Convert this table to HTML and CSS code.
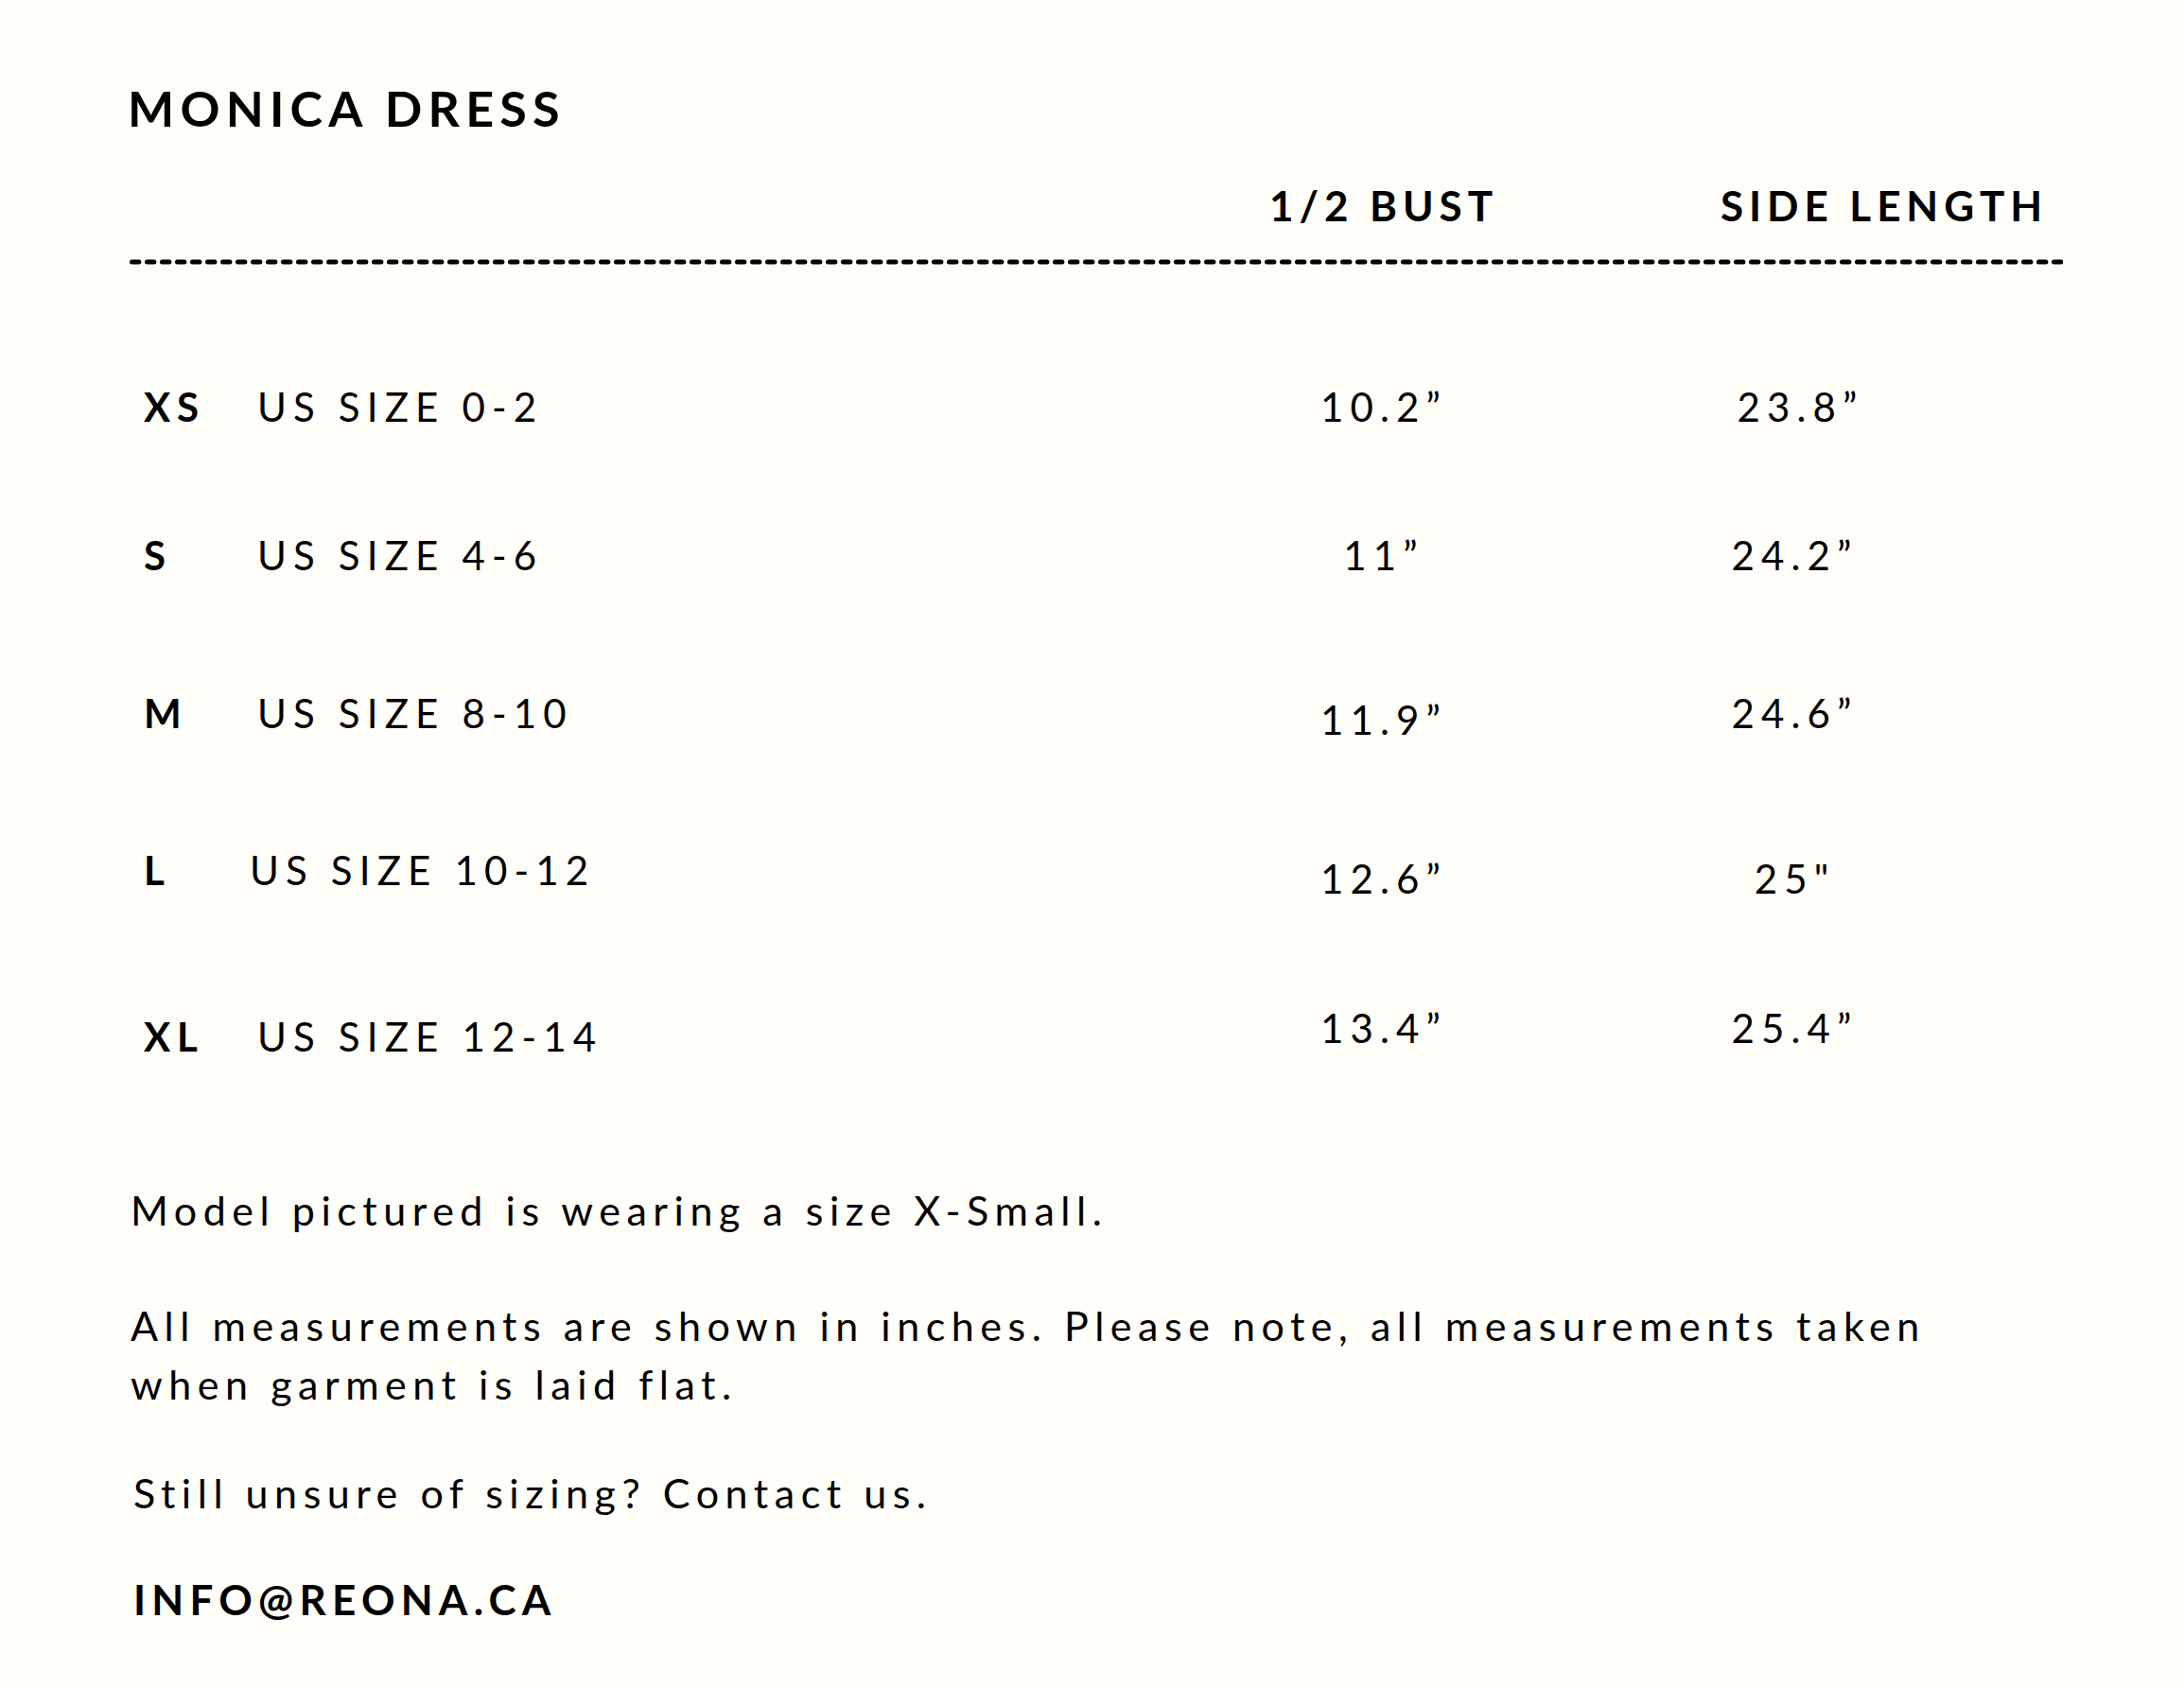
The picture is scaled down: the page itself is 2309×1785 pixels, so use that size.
FILE: index.html
```html
<!DOCTYPE html>
<html lang="en">
<head>
<meta charset="utf-8">
<title>Monica Dress – Size Guide</title>
<link rel="stylesheet" href="styles.css">
</head>
<body>
<main class="sheet">
  <h1 class="title">MONICA DRESS</h1>
  <div class="head">
    <span class="head-bust">1/2 BUST</span>
    <span class="head-side">SIDE LENGTH</span>
  </div>
  <svg class="rule" width="2046" height="6" viewBox="0 0 2046 6" aria-hidden="true">
    <line x1="4.5" y1="3" x2="2046" y2="3" stroke="#000" stroke-width="5" stroke-linecap="round" stroke-dasharray="7.4 8.6"/>
  </svg>
  <div class="rows">
    <div class="row row-xs">
      <span class="code">XS</span>
      <span class="us">US SIZE 0-2</span>
      <span class="bust">10.2”</span>
      <span class="side">23.8”</span>
    </div>
    <div class="row row-s">
      <span class="code">S</span>
      <span class="us">US SIZE 4-6</span>
      <span class="bust">11”</span>
      <span class="side">24.2”</span>
    </div>
    <div class="row row-m">
      <span class="code">M</span>
      <span class="us">US SIZE 8-10</span>
      <span class="bust">11.9”</span>
      <span class="side">24.6”</span>
    </div>
    <div class="row row-l">
      <span class="code">L</span>
      <span class="us">US SIZE 10-12</span>
      <span class="bust">12.6”</span>
      <span class="side">25"</span>
    </div>
    <div class="row row-xl">
      <span class="code">XL</span>
      <span class="us">US SIZE 12-14</span>
      <span class="bust">13.4”</span>
      <span class="side">25.4”</span>
    </div>
  </div>
  <div class="notes">
    <p class="note note-model">Model pictured is wearing a size X-Small.</p>
    <p class="note note-measure">All measurements are shown in inches. Please note, all measurements taken<br>when garment is laid flat.</p>
    <p class="note note-contact">Still unsure of sizing? Contact us.</p>
    <p class="email">INFO@REONA.CA</p>
  </div>
</main>
</body>
</html>
```

FILE: styles.css
```css
html, body {
  margin: 0;
  padding: 0;
}

body {
  background: #fefdf8;
  color: #000;
  font-family: Lato, "Open Sans", "Liberation Sans", sans-serif;
}

.sheet {
  width: 2047px;
  padding: 84px 0 0 135px;
}

.title {
  margin: 0;
  font-size: 52px;
  line-height: 60px;
  font-weight: 700;
  letter-spacing: 0.12em;
  white-space: nowrap;
}

.head {
  margin-top: 43px;
  display: grid;
  grid-template-columns: 1178px 300px 1fr;
  height: 60px;
  line-height: 60px;
  font-size: 44px;
  font-weight: 700;
  letter-spacing: 0.135em;
  white-space: nowrap;
}

.head-bust {
  grid-column: 2;
  text-align: center;
}

.head-side {
  grid-column: 3;
  padding-left: 206px;
}

.rule {
  display: block;
  margin-top: 27px;
}

.rows {
  padding-left: 17px;
}

.row {
  display: grid;
  grid-template-columns: 120px 1041px 300px 1fr;
  height: 60px;
  line-height: 60px;
  font-size: 42px;
  letter-spacing: 0.17em;
  white-space: nowrap;
}

.code {
  font-weight: 700;
  letter-spacing: 0.16em;
}

.bust,
.side {
  text-align: center;
}

.row-xs { margin-top: 120px; }
.row-s  { margin-top: 97px; }
.row-m  { margin-top: 107px; }
.row-l  { margin-top: 106px; }
.row-xl { margin-top: 116px; }

.row-xs .side { padding-left: 12px; }
.row-m .bust { margin-top: 7px; }
.row-l .bust,
.row-l .side { margin-top: 9px; }
.row-xl .bust,
.row-xl .side { margin-top: -9px; }
.row-l .us { margin-left: -8px; }

.notes {
  padding-left: 3px;
  white-space: nowrap;
}

.note {
  margin: 0;
  font-size: 43px;
  line-height: 62px;
  letter-spacing: 0.152em;
}

.note-model { margin-top: 123px; }
.note-measure { margin-top: 60px; }
.note-contact {
  margin-top: 53px;
  padding-left: 3px;
}

.email {
  margin: 50px 0 0;
  padding-left: 3px;
  font-size: 44px;
  line-height: 62px;
  font-weight: 700;
  letter-spacing: 0.142em;
}
```
